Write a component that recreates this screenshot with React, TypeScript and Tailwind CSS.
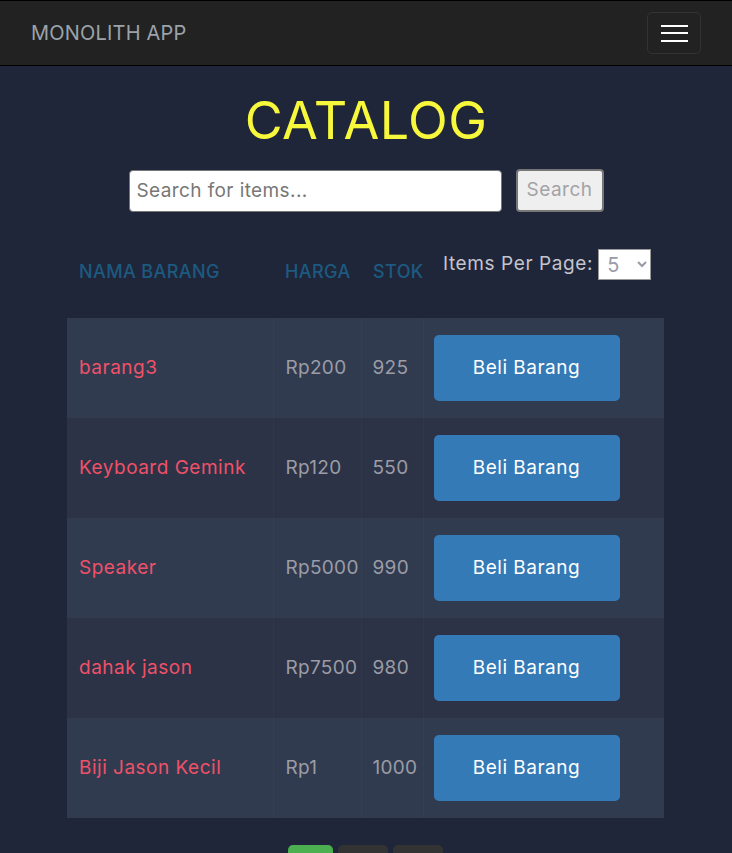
import { useState } from 'react'

interface Item {
  name: string
  price: number
  stock: number
}

const items: Item[] = [
  { name: 'barang3', price: 200, stock: 925 },
  { name: 'Keyboard Gemink', price: 120, stock: 550 },
  { name: 'Speaker', price: 5000, stock: 990 },
  { name: 'dahak jason', price: 7500, stock: 980 },
  { name: 'Biji Jason Kecil', price: 1, stock: 1000 },
]

function Navbar() {
  return (
    <nav className="flex h-[66px] items-center justify-between border-t border-b border-black bg-[#222] pl-[31px] pr-[31px]">
      <span className="text-[20px] tracking-[0.2px] text-[#9aa3ab]">MONOLITH APP</span>
      <button className="flex h-[42px] w-[54px] flex-col items-center justify-center gap-[5.5px] rounded-[5px] border border-[#333]">
        <span className="block h-[2px] w-[27px] bg-white" />
        <span className="block h-[2px] w-[27px] bg-white" />
        <span className="block h-[2px] w-[27px] bg-white" />
      </button>
    </nav>
  )
}

export default function App() {
  const [query, setQuery] = useState('')
  const [perPage, setPerPage] = useState('5')

  return (
    <div className="min-h-[853px] overflow-hidden bg-[#202639] font-['Inter','Liberation_Sans',sans-serif] text-[16px]">
      <Navbar />

      <h1 className="mt-[22px] text-center text-[52px] leading-[66px] tracking-[0.4px] text-[#f7f73b]">CATALOG</h1>

      <div className="mt-[15px] flex items-center justify-center gap-[14px]">
        <input
          value={query}
          onChange={(e) => setQuery(e.target.value)}
          placeholder="Search for items..."
          className="h-[42px] w-[373px] rounded-[4px] border border-[#767676] bg-white px-[7px] text-[19px] tracking-[0.4px] text-black placeholder:text-[#777]"
        />
        <button className="h-[43px] w-[88px] rounded-[4px] border-2 border-[#777] bg-[#efefef] text-[19px] tracking-[0.5px] text-[#a3a3a8]">
          Search
        </button>
      </div>

      <div className="ml-[67px] mt-[27px] w-[597px]">
        <table className="w-full table-fixed border-collapse">
          <colgroup>
            <col className="w-[206px]" />
            <col className="w-[88px]" />
            <col className="w-[62px]" />
            <col />
          </colgroup>
          <thead>
            <tr className="h-[79px] text-left align-top text-[18px] text-[#1c5a80]">
              <th className="pl-[12px] pt-[19px] font-medium tracking-[0.4px]">NAMA BARANG</th>
              <th className="pl-[12px] pt-[19px] font-medium tracking-[0.4px]">HARGA</th>
              <th className="pl-[12px] pt-[19px] font-medium tracking-[0.4px]">STOK</th>
              <th className="pl-[20px] pt-[10px] font-normal">
                <div className="flex items-center gap-[5px] text-[19px] tracking-[0.6px] text-[#c4c4cc]">
                  <span>Items Per Page:</span>
                  <select
                    value={perPage}
                    onChange={(e) => setPerPage(e.target.value)}
                    className="h-[31px] w-[53px] border border-[#999] bg-white pl-[4px] text-[20px] text-[#9a9aa8]"
                  >
                    <option value="5">5</option>
                    <option value="10">10</option>
                    <option value="20">20</option>
                  </select>
                </div>
              </th>
            </tr>
          </thead>
          <tbody>
            {items.map((item, i) => (
              <tr key={item.name} className={i % 2 === 0 ? 'h-[100px] bg-[#313b50]' : 'h-[100px] bg-[#2c3346]'}>
                <td className="border-r border-white/[0.02] pl-[12px] text-[19px] tracking-[0.5px] text-[#ef5169]">{item.name}</td>
                <td className="border-r border-white/[0.02] pl-[12px] text-[19px] tracking-[0.3px] text-[#9b9ca5]">Rp{item.price}</td>
                <td className="border-r border-white/[0.02] pl-[11px] text-[19px] tracking-[0.3px] text-[#9b9ca5]">{item.stock}</td>
                <td className="pl-[10px]">
                  <button className="h-[66px] w-[186px] rounded-[5px] bg-[#337ab7] text-[19px] tracking-[0.5px] text-white">Beli Barang</button>
                </td>
              </tr>
            ))}
          </tbody>
        </table>
      </div>

      <div className="mt-[27px] flex justify-center gap-[5px] pr-[2px]">
        <button className="h-[30px] w-[45px] rounded-[5px] bg-[#4caf50] text-white">1</button>
        <button className="h-[30px] w-[50px] rounded-[5px] bg-[#333] text-white">2</button>
        <button className="h-[30px] w-[50px] rounded-[5px] bg-[#333] text-white">3</button>
      </div>
    </div>
  )
}
